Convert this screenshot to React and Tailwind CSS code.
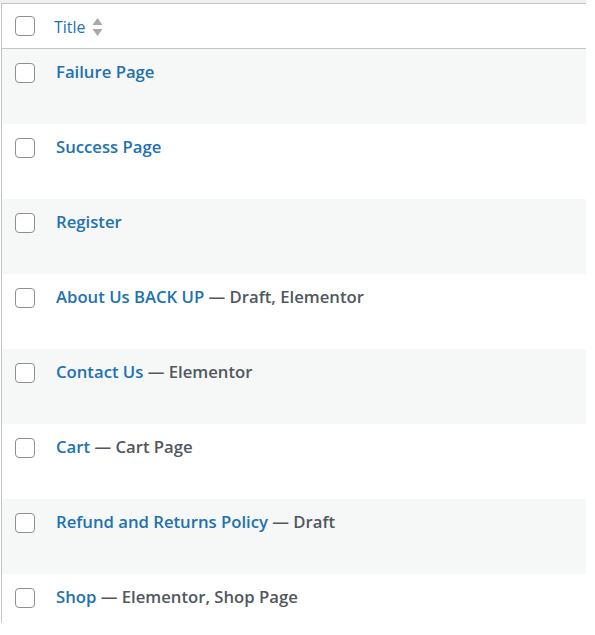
import React from "react";

const rows = [
  { title: "Failure Page", state: "" },
  { title: "Success Page", state: "" },
  { title: "Register", state: "" },
  { title: "About Us BACK UP", state: "Draft, Elementor" },
  { title: "Contact Us", state: "Elementor" },
  { title: "Cart", state: "Cart Page" },
  { title: "Refund and Returns Policy", state: "Draft" },
  { title: "Shop", state: "Elementor, Shop Page" },
];

function Box() {
  return (
    <span className="block w-[20px] h-[20px] rounded-[4px] border border-[#8c8f94] bg-white shrink-0" />
  );
}

export default function App() {
  return (
    <div
      className="w-[595px] h-[635px] bg-white"
      style={{ fontFamily: '"Open Sans", "Noto Sans", sans-serif' }}
    >
      <div className="w-[586px] h-[3px] bg-[#f0f0f1]" />
      <div className="ml-[1px] w-[585px] border-l border-t border-[#c3c4c7]">
        <div className="h-[45px] border-b border-[#c3c4c7] flex items-start bg-white">
          <div className="pl-[13px] pt-[12px]">
            <Box />
          </div>
          <div className="pl-[19px] pt-[11px] flex items-center text-[16px] leading-[24px] text-[#2271b1]">
            <span>Title</span>
            <svg width="11" height="20" viewBox="0 0 11 20" className="ml-[6px]">
              <path d="M0.5 8 L5.5 1 L10.5 8 Z" fill="#a7aaad" />
              <path d="M0.5 12 L5.5 19 L10.5 12 Z" fill="#a7aaad" />
            </svg>
          </div>
        </div>
        {rows.map((r, i) => (
          <div
            key={r.title}
            className={`flex items-start ${i % 2 === 0 ? "bg-[#f6f7f7]" : "bg-white"} ${i === rows.length - 1 ? "h-[49px]" : "h-[75px]"}`}
          >
            <div className="pl-[13px] pt-[14px]">
              <Box />
            </div>
            <div className="pl-[21px] pt-[11px] text-[16.7px] leading-[24px] font-semibold">
              <span className="text-[#2271b1]">{r.title}</span>
              {r.state && (
                <span className="text-[#50575e]"> — {r.state}</span>
              )}
            </div>
          </div>
        ))}
      </div>
    </div>
  );
}
